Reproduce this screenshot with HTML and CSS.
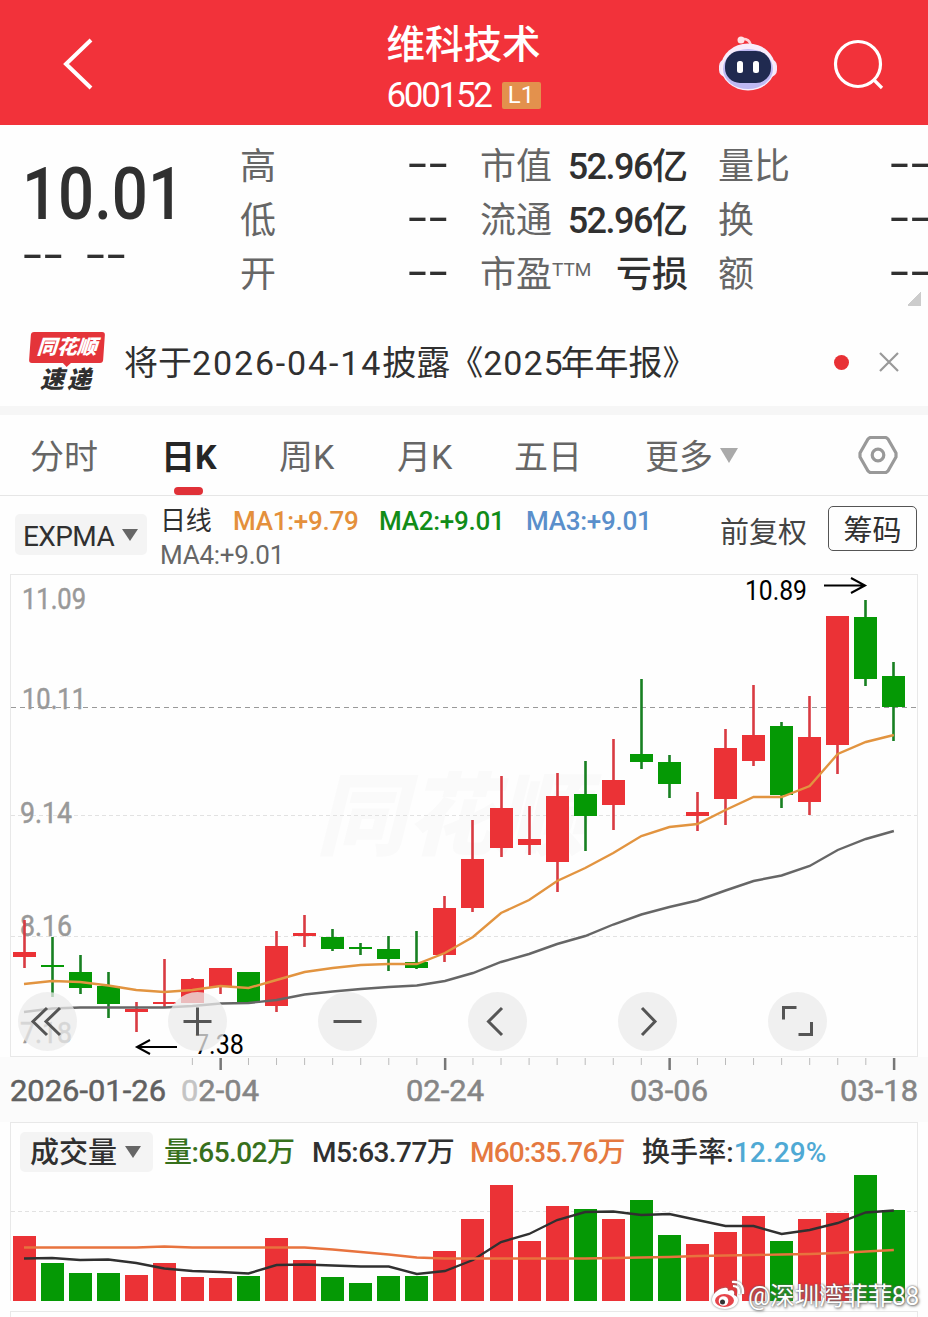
FILE: index.html
```
<!DOCTYPE html>
<html lang="zh-CN">
<head>
  <meta charset="UTF-8">
  <meta name="viewport" content="width=device-width, initial-scale=1.0">
  <title>维科技术 600152</title>
  <link rel="stylesheet" href="styles.css">
</head>
<body>
  <header class="header">
    <svg class="back" width="32" height="54" viewBox="0 0 32 54"><path d="M29 3L4 27L29 51"/></svg>
    <div class="stock">
      <h1>维科技术</h1>
      <div class="code"><span>600152</span><em>L1</em></div>
    </div>
    <div class="header-icons">
      <svg width="60" height="58" viewBox="0 0 60 58">
        <path d="M23 4Q31 3 33 10" fill="none" stroke="#ffd3d8" stroke-width="2.5"/>
        <circle cx="23" cy="5" r="3.5" fill="#ffe3e6"/>
        <rect x="1" y="24" width="58" height="18" rx="7" fill="#f6e6fa"/>
        <ellipse cx="30" cy="32" rx="27" ry="23.5" fill="#f8edfb"/>
        <ellipse cx="30" cy="34" rx="25" ry="20" fill="#bfb9f3"/>
        <rect x="7" y="16" width="46" height="32" rx="15" fill="#202a50"/>
        <rect x="19" y="26" width="6" height="12" rx="2.500" fill="#fff"/>
        <rect x="35" y="26" width="6" height="12" rx="2.500" fill="#fff"/>
      </svg>
      <svg width="52" height="52" viewBox="0 0 52 52">
        <circle cx="25" cy="26" r="22.5" fill="none" stroke="#fff" stroke-width="3.2"/>
        <path d="M41 42L49 50" stroke="#fff" stroke-width="3.2"/>
      </svg>
    </div>
  </header>

  <section class="quote">
    <div class="now">
      <strong>10.01</strong>
      <p><i class="dash">--</i><i class="dash">--</i></p>
    </div>
    <dl class="col">
      <div><dt>高</dt><dd><i class="dash">--</i></dd></div>
      <div><dt>低</dt><dd><i class="dash">--</i></dd></div>
      <div><dt>开</dt><dd><i class="dash">--</i></dd></div>
    </dl>
    <dl class="col">
      <div><dt>市值</dt><dd><b>52.96</b>亿</dd></div>
      <div><dt>流通</dt><dd><b>52.96</b>亿</dd></div>
      <div><dt>市盈<sup>TTM</sup></dt><dd>亏损</dd></div>
    </dl>
    <dl class="col">
      <div><dt>量比</dt><dd><i class="dash">--</i></dd></div>
      <div><dt>换</dt><dd><i class="dash">--</i></dd></div>
      <div><dt>额</dt><dd><i class="dash">--</i></dd></div>
    </dl>
    <span class="corner"></span>
  </section>

  <section class="notice">
    <div class="logo">
      <span class="logo-top">同花顺</span>
      <span class="logo-bottom">速递</span>
    </div>
    <p>将于<span class="date">2026-04-14</span>披露<span class="quote-mark">《</span><span class="year">2025</span>年年报》</p>
    <span class="dot"></span>
    <svg width="22" height="22" viewBox="0 0 22 22"><path d="M2 2L20 20M20 2L2 20" stroke="#999" stroke-width="2.2"/></svg>
  </section>

  <nav class="tabs">
    <a>分时</a>
    <a class="active">日K</a>
    <a>周K</a>
    <a>月K</a>
    <a>五日</a>
    <a>更多<span class="arrow"></span></a>
    <svg width="40" height="40" viewBox="0 0 40 40" fill="none" stroke="#999" stroke-width="3.2">
      <path d="M12 2.5H28L30 4L38 18V22L30 36L28 37.500H12L10 36L2 22V18L10 4Z" stroke-linejoin="round"/>
      <circle cx="20" cy="20" r="5.800"/>
    </svg>
  </nav>

  <section class="indicator">
    <button class="picker">EXPMA<span class="arrow"></span></button>
    <div class="ma">
      <span class="day">日线</span>
      <span class="ma1">MA1:+9.79</span>
      <span class="ma2">MA2:+9.01</span>
      <span class="ma3">MA3:+9.01</span>
      <span class="ma4">MA4:+9.01</span>
    </div>
    <span class="adjust">前复权</span>
    <button class="chips">筹码</button>
  </section>

  <section class="chart">
    <svg id="kline" width="928" height="548" viewBox="0 574 928 548">
      <rect x="0" y="1057" width="928" height="65" fill="#fbfbfb"/>
      <rect class="frame" x="10.5" y="574.5" width="907" height="482"/>
      <text class="watermark" x="316" y="848">同花顺</text>
      <path class="grid" d="M11 815.500H917M11 936.500H917"/>
      <path class="last" d="M11 707.500H917"/>
      <g class="axis">
        <text x="22" y="609" textLength="64" lengthAdjust="spacingAndGlyphs">11.09</text>
        <text x="22" y="709" textLength="64" lengthAdjust="spacingAndGlyphs">10.11</text>
        <text x="20" y="823" textLength="52" lengthAdjust="spacingAndGlyphs">9.14</text>
        <text x="20" y="936" textLength="52" lengthAdjust="spacingAndGlyphs">8.16</text>
        <text x="20" y="1043" textLength="52" lengthAdjust="spacingAndGlyphs">7.18</text>
      </g>
      <g id="candles"></g>
      <g class="mark">
        <text x="745" y="600" textLength="62" lengthAdjust="spacingAndGlyphs">10.89</text>
        <path d="M824 585.500H864M851 578L865 585.500L851 593"/>
        <text x="195" y="1054" textLength="49" lengthAdjust="spacingAndGlyphs">7.38</text>
        <path d="M177 1047H138M150 1040L137 1047L150 1054"/>
      </g>
      <g id="ticks"></g>
      <g class="dates">
        <text class="first" x="10" y="1101" textLength="156" lengthAdjust="spacingAndGlyphs">2026-01-26</text>
        <text x="181" y="1101" textLength="78" lengthAdjust="spacingAndGlyphs"><tspan class="pale">0</tspan>2-04</text>
        <text x="406" y="1101" textLength="78" lengthAdjust="spacingAndGlyphs">02-24</text>
        <text x="630" y="1101" textLength="78" lengthAdjust="spacingAndGlyphs">03-06</text>
        <text x="840" y="1101" textLength="78" lengthAdjust="spacingAndGlyphs">03-18</text>
      </g>
    </svg>
    <div class="tools">
      <button><svg viewBox="0 0 59 59"><path d="M29 16L15 29.500L29 43M42 16L28 29.500L42 43"/></svg></button>
      <button><svg viewBox="0 0 59 59"><path d="M15.500 29.500H43.500M29.500 15.500V43.500"/></svg></button>
      <button><svg viewBox="0 0 59 59"><path d="M15.500 29.500H43.500"/></svg></button>
      <button><svg viewBox="0 0 59 59"><path d="M34 16L20.500 29.500L34 43"/></svg></button>
      <button><svg viewBox="0 0 59 59"><path d="M24 16L37 29.500L24 43"/></svg></button>
      <button><svg viewBox="0 0 59 59"><path d="M15.500 27.500V15.500H28.500M43.500 30V42.500H30.500"/></svg></button>
    </div>
  </section>

  <section class="volume">
    <div class="volume-head">
      <button class="picker">成交量<span class="arrow"></span></button>
      <span class="v1">量:65.02万</span>
      <span class="v2">M5:63.77万</span>
      <span class="v3">M60:35.76万</span>
      <span class="v4">换手率:<b>12.29%</b></span>
    </div>
    <svg id="vol" width="906" height="129" viewBox="11 1172 906 129">
      <path class="grid" d="M11 1211.500H917"/>
      <g id="bars"></g>
    </svg>
  </section>
  <div class="next"></div>

  <div class="weibo">
    <svg width="34" height="30" viewBox="0 0 34 30">
      <path d="M13 8C6 9 1 15 1 20C1 26 8 29 14 29C21 29 27 25 27 20C27 17 25 16 23 15C24 11 22 9 17 11C17 8 16 7 13 8Z" fill="#fff"/>
      <ellipse cx="13.500" cy="20.500" rx="9.500" ry="6.500" fill="#e6444a"/>
      <circle cx="12.500" cy="21" r="4.800" fill="#fff"/>
      <circle cx="11.500" cy="22" r="2.500" fill="#333"/>
      <path d="M22 6Q29 6 28 14M21 2Q33 1 32 14" fill="none" stroke="#fff" stroke-width="2.200"/>
    </svg>
    <span>@深圳湾菲菲88</span>
  </div>

  <script>
    const step = 28.06;
    const left = 24;
    const red = "#eb3236";
    const green = "#059905";

    // [up/down, high, low, body top, body bottom, volume top]
    const days = [
      ["r", 920, 968, 952, 957, 1236], ["g", 937, 997, 965, 967, 1263],
      ["g", 955, 994, 972, 988, 1273], ["g", 972, 1018, 986, 1004, 1273],
      ["r", 1002, 1032, 1009, 1012, 1275], ["r", 959, 1007, 1002, 1004, 1263],
      ["r", 978, 1000, 979, 1003, 1277], ["r", 968, 994, 968, 987, 1278],
      ["g", 972, 1003, 972, 1003, 1276], ["r", 931, 1012, 946, 1006, 1238],
      ["r", 915, 947, 933, 936, 1260], ["g", 929, 951, 937, 949, 1277],
      ["g", 943, 955, 947, 949, 1283], ["g", 936, 971, 949, 959, 1276],
      ["g", 931, 969, 962, 968, 1276], ["r", 896, 962, 908, 955, 1251],
      ["r", 820, 912, 859, 908, 1219], ["r", 776, 857, 808, 848, 1185],
      ["r", 806, 855, 839, 845, 1241], ["r", 773, 892, 796, 862, 1206],
      ["g", 761, 851, 794, 816, 1209], ["r", 739, 830, 780, 805, 1219],
      ["g", 679, 769, 754, 762, 1200], ["g", 755, 798, 762, 784, 1235],
      ["r", 792, 831, 812, 816, 1244], ["r", 729, 825, 748, 799, 1232],
      ["r", 685, 766, 735, 761, 1216], ["g", 722, 808, 726, 795, 1241],
      ["r", 696, 815, 737, 802, 1219], ["r", 616, 774, 616, 745, 1213],
      ["g", 600, 686, 617, 679, 1175], ["g", 662, 741, 676, 707, 1210]
    ];
    const ma1 = [984, 981, 982, 985.5, 990, 992, 990, 986, 988, 980, 972, 968, 965, 964, 964, 953, 937, 913, 900, 881, 868, 853, 836, 827, 824, 810, 797, 797, 786, 754, 742, 735];
    const ma4 = [1012, 1008.5, 1007.5, 1007.5, 1007.5, 1007.5, 1006, 1003.5, 1003, 1000, 994.5, 991.5, 989, 987, 985.5, 981, 973, 962, 954, 944, 936, 924.5, 914.5, 907, 900.5, 890.5, 881, 875.5, 866, 850, 839, 831];
    const m5 = [1258.5, 1258, 1260, 1259.5, 1263, 1268.5, 1271, 1272, 1273.5, 1265, 1264.5, 1265.5, 1266.5, 1266.5, 1274, 1271, 1260, 1242, 1234, 1220, 1212, 1211.5, 1215, 1214, 1220, 1226, 1226, 1234, 1230, 1223, 1212.5, 1210.5];
    const m60 = [1247.5, 1247.5, 1247.5, 1247.5, 1247.5, 1246.5, 1247.5, 1247.5, 1247.5, 1247.5, 1247.5, 1249.5, 1252, 1254.5, 1257.5, 1258.5, 1258.5, 1258.5, 1258.5, 1258.5, 1258.5, 1258, 1257.5, 1257, 1256, 1255.5, 1255, 1254.5, 1254, 1253, 1251.5, 1250];

    const xAt = i => left + i * step;
    const rect = (x, y, w, h, fill) => `<rect x="${x}" y="${y}" width="${w}" height="${h}" fill="${fill}"/>`;
    const line = (values, cls) => `<polyline class="${cls}" points="${values.map((y, i) => xAt(i) + "," + y).join(" ")}"/>`;

    let candles = "", bars = "", ticks = "";
    days.forEach(([dir, high, low, top, bottom, vol], i) => {
      const color = dir === "r" ? red : green;
      const x = Math.round(xAt(i) - 11.5);
      candles += rect(x + 10.2, high, 2.6, low - high, dir === "r" ? "#d93b42" : "#188022");
      candles += rect(x, top, 23, bottom - top, color);
      bars += rect(x, vol, 23, 1301 - vol, color);
      if (i > 5) {
        const major = [7, 15, 23, 31].includes(i);
        ticks += rect(xAt(i) - (major ? 1 : 0.5), 1058, major ? 2.5 : 1, major ? 12 : 7, major ? "#777" : "#bbb");
      }
    });
    document.getElementById("candles").innerHTML = candles + line(ma4, "line-dark") + line(ma1, "line-orange");
    document.getElementById("ticks").innerHTML = ticks;
    document.getElementById("bars").innerHTML = bars + line(m5, "line-m5") + line(m60, "line-m60");
  </script>
</body>
</html>
```
FILE: styles.css
```
* {
  box-sizing: border-box;
}
body {
  margin: 0;
  width: 928px;
  height: 1317px;
  overflow: hidden;
  position: relative;
  background: #fefefe;
  color: #303030;
  font-family: Roboto, "Noto Sans CJK SC", sans-serif;
}
h1, p, dl, dd {
  margin: 0;
}
button {
  border: 0;
  padding: 0;
  font: inherit;
  color: inherit;
}
svg {
  display: block;
}

/* header */
.header {
  height: 125px;
  padding: 0 43px 0 62px;
  background: #f2323a;
  color: #fff;
  display: grid;
  grid-template-columns: 1fr 156px 1fr;
  align-items: center;
}
.back path {
  fill: none;
  stroke: #fff;
  stroke-width: 4;
}
.back {
  margin-top: 2px;
}
.stock {
  margin: 12px 0 0 -9px;
  width: 156px;
}
.stock h1 {
  font-size: 38.5px;
  line-height: 50px;
  font-weight: 500;
  white-space: nowrap;
}
.code {
  display: flex;
  align-items: center;
  height: 44px;
  margin-top: 4px;
}
.code span {
  font-size: 35px;
  letter-spacing: -2.3px;
  width: 115px;
}
.code em {
  width: 39px;
  height: 27px;
  flex: none;
  line-height: 27px;
  font-style: normal;
  font-size: 24px;
  text-align: center;
  background: #e3914d;
  border-radius: 2px;
}
.header-icons {
  display: flex;
  justify-content: flex-end;
  align-items: center;
  gap: 55px;
  padding-top: 3px;
}

/* quote */
.quote {
  position: relative;
  height: 195px;
  padding: 14px 2px 0 22px;
  display: grid;
  grid-template-columns: 185px 207px 208px 208px;
  column-gap: 33px;
}
.quote .col:nth-last-of-type(1) {
  margin-left: -3px;
}
.now strong {
  display: block;
  margin-top: 13px;
  font-size: 73px;
  line-height: 84px;
  font-weight: 500;
  transform: scaleX(.87);
  transform-origin: 0 0;
}
.now p {
  display: flex;
  gap: 23px;
  line-height: 30px;
  margin-top: 5px;
}
.dash {
  display: inline-block;
  width: 40px;
  height: 24px;
  font: 500 36px/24px "Noto Sans", sans-serif;
  transform: scaleX(1.8);
  transform-origin: 0 0;
}
.col div {
  display: flex;
  justify-content: space-between;
  height: 54px;
  line-height: 56px;
  font-size: 36px;
  white-space: nowrap;
}
.col .dash {
  position: relative;
  top: -4px;
}
.col dt {
  color: #666;
}
.col dd {
  font-weight: 500;
}
.col b {
  font-weight: 500;
  letter-spacing: -1.5px;
}
.col sup {
  font-size: 19px;
  line-height: 1;
  vertical-align: 11px;
}
.corner {
  position: absolute;
  right: 7px;
  bottom: 14px;
  width: 14px;
  height: 14px;
  background: linear-gradient(135deg, transparent 50%, #ccc 50%);
}

/* notice */
.notice {
  height: 95px;
  padding: 0 28px 2px 30px;
  border-bottom: 9px solid #f6f6f6;
  display: flex;
  align-items: center;
  font-size: 34px;
}
.logo {
  width: 74px;
  margin-right: 20px;
  text-align: center;
  font-style: italic;
  font-weight: 900;
  line-height: 1;
}
.logo-top {
  display: block;
  height: 31px;
  font-size: 20px;
  line-height: 30px;
  color: #fff;
  background: #e4343a;
  border-radius: 3px;
  transform: skewX(-4deg);
}
.logo-top::after {
  content: "";
  position: absolute;
  left: 33px;
  top: 30px;
  border: 5px solid transparent;
  border-top-color: #e4343a;
  border-bottom: 0;
}
.logo-bottom {
  display: block;
  margin-top: 5px;
  font-size: 24px;
  letter-spacing: 3px;
}
.notice p {
  flex: 1;
  white-space: nowrap;
  padding-bottom: 4px;
}
.date {
  letter-spacing: 1.85px;
}
.quote-mark {
  margin-left: -1px;
}
.year {
  letter-spacing: 1px;
}
.quote-mark + .year {
  margin-right: -3px;
}
.dot {
  width: 15px;
  height: 15px;
  border-radius: 50%;
  background: #e83135;
  margin-right: 29px;
}

/* tabs */
.tabs {
  height: 81px;
  padding-left: 30px;
  border-bottom: 1px solid #e6e6e6;
  display: grid;
  grid-template-columns: 131px 118px 118px 117px 131px 213px 40px;
  align-items: center;
  font-size: 34px;
  color: #666;
}
.tabs a {
  height: 80px;
  line-height: 84px;
  white-space: nowrap;
}
.tabs .active {
  color: #262626;
  font-weight: 700;
  position: relative;
}
.tabs .active::after {
  content: "";
  position: absolute;
  left: 13px;
  bottom: 0;
  width: 29px;
  height: 8px;
  border-radius: 4px;
  background: #e03138;
}
.arrow {
  display: inline-block;
  border: 8px solid transparent;
  border-top: 12px solid #666;
  border-bottom: 0;
}
.tabs .arrow {
  margin-left: 7px;
  vertical-align: 6px;
  border-width: 15px 9px 0;
  border-top-color: #aaa;
}

/* indicator row */
.indicator {
  height: 78px;
  padding: 0 11px 0 15px;
  display: flex;
}
.picker {
  height: 41px;
  border-radius: 5px;
  background: #f4f4f4;
  display: flex;
  align-items: center;
}
.indicator .picker {
  margin-top: 18px;
  width: 132px;
  padding: 3px 0 0 8px;
  font-size: 28px;
  letter-spacing: -.6px;
}
.picker .arrow {
  margin: -3px 0 0 8px;
}
.ma {
  width: 520px;
  margin: 8px 0 0 13px;
  display: flex;
  flex-wrap: wrap;
  align-content: flex-start;
  font-size: 26px;
  line-height: 34px;
  font-weight: 500;
  letter-spacing: -.25px;
}
.ma span {
  width: 147px;
}
.ma .day {
  width: 73px;
  font-weight: 400;
}
.ma .ma1 {
  width: 146px;
  color: #e4903c;
}
.ma .ma2 {
  color: #118c18;
}
.ma .ma3 {
  color: #5a8fcb;
}
.ma .ma4 {
  font-weight: 400;
  color: #666;
}
.adjust {
  margin-left: 40px;
  width: 108px;
  font-size: 29px;
  line-height: 74px;
  white-space: nowrap;
  color: #444;
}
.chips {
  margin-top: 10px;
  width: 89px;
  height: 45px;
  border: 1.5px solid #555;
  border-radius: 5px;
  background: none;
  font-size: 29px;
  line-height: 40px;
  padding-top: 4px;
}

/* charts */
.chart {
  position: relative;
  height: 548px;
}
.frame {
  fill: none;
  stroke: #e8e8e8;
}
.watermark {
  font-size: 90px;
  font-weight: 900;
  font-style: italic;
  fill: #fafafa;
}
.grid {
  stroke: #e2e2e2;
  stroke-dasharray: 4 3;
}
.last {
  stroke: #999;
  stroke-dasharray: 5 4;
}
.axis text {
  font-size: 29px;
  fill: #999;
  stroke: #999;
  stroke-width: .5;
}
.mark text {
  font-size: 27px;
  fill: #000;
}
.mark path {
  fill: none;
  stroke: #000;
  stroke-width: 2;
}
.dates text {
  font-size: 30px;
  fill: #858585;
  stroke: #858585;
  stroke-width: .5;
}
.dates .first {
  fill: #606060;
  stroke: #606060;
}
.dates .pale {
  fill: #c4c4c4;
  stroke: #c4c4c4;
}
polyline {
  fill: none;
  stroke-width: 2.4;
}
.line-orange {
  stroke: #e29440;
}
.line-dark {
  stroke: #666;
}
.line-m5 {
  stroke: #303030;
}
.line-m60 {
  stroke: #e8733e;
}
.tools {
  position: absolute;
  left: 17.5px;
  top: 417.5px;
  display: flex;
  gap: 91.2px;
}
.tools button {
  width: 59px;
  height: 59px;
  border-radius: 50%;
  background: rgba(235, 235, 235, .75);
}
.tools path {
  fill: none;
  stroke: #555;
  stroke-width: 3;
}

.volume {
  margin: 0 10px;
  height: 179px;
  border: 1px solid #e8e8e8;
  border-bottom: 0;
}
.volume-head {
  height: 49px;
  padding: 4px 0 0 9px;
  display: flex;
  align-items: center;
  font-size: 28px;
  white-space: nowrap;
  font-weight: 500;
}
.volume-head span {
  letter-spacing: -.55px;
}
.volume-head .picker {
  width: 133px;
  height: 40px;
  padding-left: 10px;
  margin: 4px 11px 0 0;
  padding-bottom: 3px;
  font-size: 29px;
}
.volume-head .picker .arrow {
  margin-top: 3px;
}
.volume-head .v1 {
  width: 148px;
  color: #37701c;
}
.volume-head .v2 {
  width: 158px;
}
.volume-head .v3 {
  width: 172px;
  letter-spacing: -.85px;
  color: #e5793f;
}
.volume-head .v4 {
  letter-spacing: .1px;
}
.volume-head b {
  font-weight: 500;
  color: #4fa9d4;
}
.next {
  margin: 10px 10px 0;
  height: 20px;
  border: 1px solid #e8e8e8;
}

.weibo {
  position: absolute;
  left: 711px;
  top: 1280px;
  display: flex;
  gap: 3px;
  color: #fff;
  font-size: 25px;
  letter-spacing: -.6px;
  line-height: 33px;
  white-space: nowrap;
  text-shadow: 0 0 2px #555, 1px 1px 3px #777;
}
.weibo svg {
  filter: drop-shadow(0 0 1px #777);
}
```
